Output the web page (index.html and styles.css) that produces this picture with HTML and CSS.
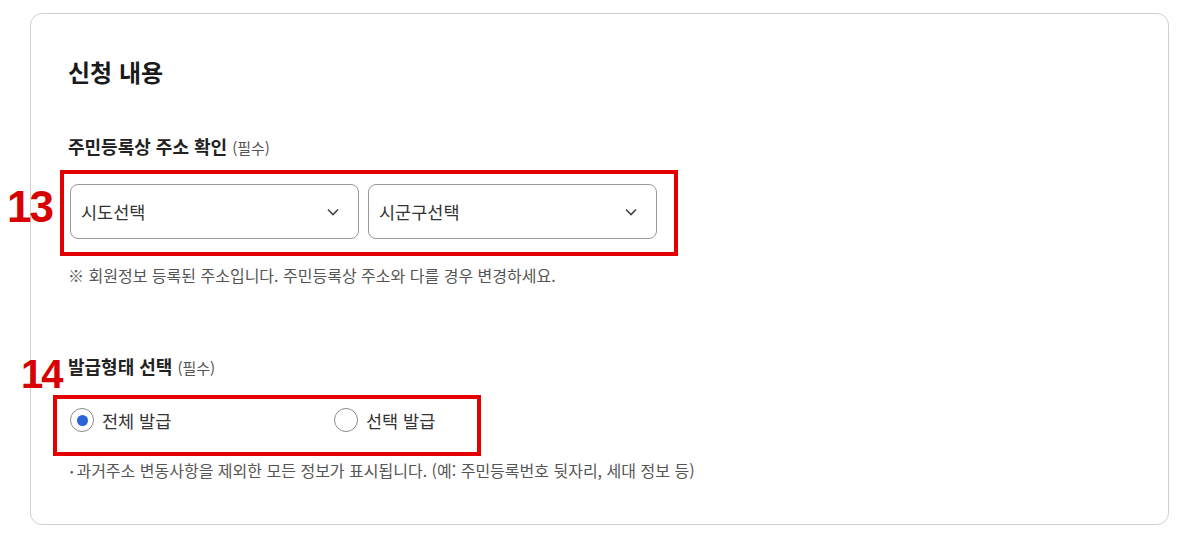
FILE: index.html
```html
<!DOCTYPE html>
<html lang="ko">
<head>
<meta charset="utf-8">
<link rel="stylesheet" href="styles.css">
</head>
<body>
<div class="card">
  <h2 class="title">신청 내용</h2>

  <section class="field field-address">
    <div class="label">주민등록상 주소 확인 <span class="req">(필수)</span></div>
    <div class="select-row">
      <div class="select"><span>시도선택</span><svg class="chev" width="12" height="8" viewBox="0 0 12 8"><path d="M1 1.5 L6 6.5 L11 1.5" fill="none" stroke="#444" stroke-width="1.6"/></svg></div>
      <div class="select"><span>시군구선택</span><svg class="chev" width="12" height="8" viewBox="0 0 12 8"><path d="M1 1.5 L6 6.5 L11 1.5" fill="none" stroke="#444" stroke-width="1.6"/></svg></div>
      <div class="mark mark-1"></div>
      <div class="num num-13">13</div>
    </div>
    <p class="note">※ 회원정보 등록된 주소입니다. 주민등록상 주소와 다를 경우 변경하세요.</p>
  </section>

  <section class="field field-type">
    <div class="label">발급형태 선택 <span class="req">(필수)</span></div>
    <div class="radio-row">
      <label class="radio"><span class="dot checked"></span>전체 발급</label>
      <label class="radio"><span class="dot"></span>선택 발급</label>
      <div class="mark mark-2"></div>
      <div class="num num-14">14</div>
    </div>
    <p class="note note-bullet"><span class="bullet">•</span>과거주소 변동사항을 제외한 모든 정보가 표시됩니다. (예: 주민등록번호 뒷자리, 세대 정보 등)</p>
  </section>
</div>
</body>
</html>
```
FILE: styles.css
```css
* { box-sizing: border-box; }
body {
  margin: 0;
  background: #fff;
  font-family: "Noto Sans CJK KR", "Noto Sans", sans-serif;
  color: #222;
}
.card {
  margin: 13px 0 0 30px;
  width: 1139px;
  height: 512px;
  border: 1px solid #cfcfcf;
  border-radius: 12px;
  padding: 43px 37px 0 37px;
}
.title {
  margin: 0;
  font-size: 24px;
  line-height: 30px;
  font-weight: 700;
  color: #1a1a1a;
}
.field-address { margin-top: 48px; }
.field-type { margin-top: 70px; }
.label {
  font-size: 18px;
  line-height: 22px;
  font-weight: 700;
  color: #222;
}
.req {
  font-size: 15px;
  font-weight: 400;
  color: #555;
}
.select-row {
  position: relative;
  margin-top: 25px;
  margin-left: 2px;
  display: flex;
  gap: 9px;
}
.select {
  width: 289px;
  height: 55px;
  border: 1px solid #9a9a9a;
  border-radius: 8px;
  display: flex;
  align-items: center;
  justify-content: space-between;
  padding: 0 19px 0 10px;
  font-size: 17.5px;
  color: #333;
}
.chev { display: block; }
.note {
  margin: 26px 0 0 0;
  font-size: 16px;
  line-height: 20px;
  color: #555;
}
.radio-row {
  position: relative;
  margin-top: 29px;
  margin-left: 2px;
  display: flex;
  height: 24px;
}
.radio {
  width: 264px;
  display: flex;
  align-items: center;
  gap: 8px;
  font-size: 17.5px;
  color: #333;
}
.dot {
  width: 24px;
  height: 24px;
  border: 1.5px solid #8a8a8a;
  border-radius: 50%;
  display: flex;
  align-items: center;
  justify-content: center;
}
.dot.checked::after {
  content: "";
  width: 11px;
  height: 11px;
  border-radius: 50%;
  background: #2b63d9;
}
.note-bullet { margin-top: 28px; margin-left: 2px; }
.bullet { font-size: 10px; margin-right: 3px; vertical-align: 2px; }

.mark {
  position: absolute;
  border: 4px solid #e40000;
  pointer-events: none;
}
.mark-1 { left: -10px; top: -14px; width: 618px; height: 86px; }
.mark-2 { left: -17px; top: -13px; width: 428px; height: 61px; }
.num {
  position: absolute;
  font-family: "Liberation Sans", Arial, sans-serif;
  font-weight: 700;
  color: #d80000;
  letter-spacing: -2px;
  line-height: 1;
}
.num-13 { left: -63px; top: 1px; font-size: 44px; }
.num-14 { left: -49px; top: -54px; font-size: 40px; }
```
